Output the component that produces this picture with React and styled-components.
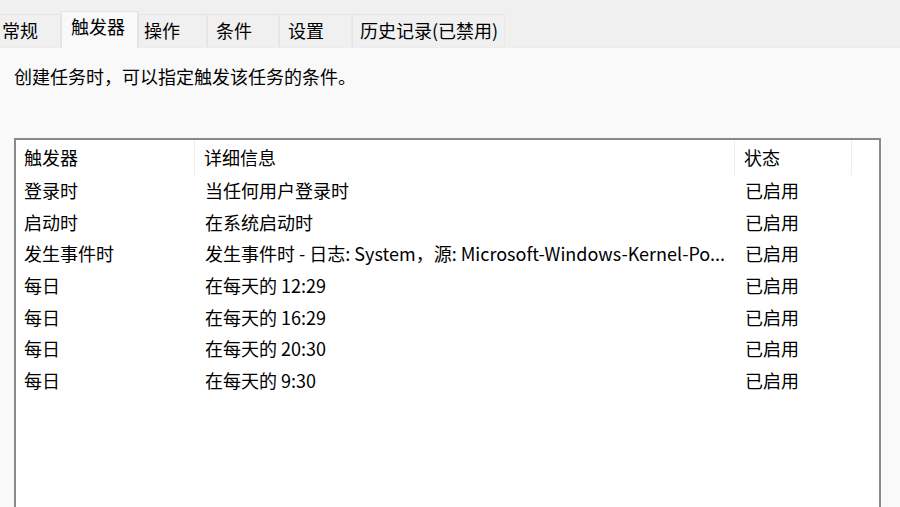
import React from 'react';
import styled, { createGlobalStyle } from 'styled-components';

const GlobalStyle = createGlobalStyle`
  html, body {
    margin: 0;
    padding: 0;
    background: #f9f9f9;
    overflow: hidden;
  }
  body {
    font-family: "Noto Sans CJK SC", "Noto Sans", sans-serif;
    color: #000;
  }
`;

const Page = styled.div`
  width: 900px;
  height: 507px;
  overflow: hidden;
  background: #f9f9f9;
`;

const TabStrip = styled.div`
  display: flex;
  align-items: flex-end;
  height: 48px;
  background: #f0f0f0;
  border-bottom: 1px solid #ececec;
  box-sizing: border-box;
`;

const Tab = styled.div`
  box-sizing: border-box;
  width: ${(p) => p.$w}px;
  margin-left: ${(p) => p.$offset || 0}px;
  height: ${(p) => (p.$active ? 37 : 33)}px;
  margin-bottom: ${(p) => (p.$active ? -1 : 0)}px;
  padding-left: ${(p) => p.$pad}px;
  padding-top: ${(p) => (p.$active ? 2 : 3)}px;
  font-size: 18px;
  line-height: 24px;
  white-space: nowrap;
  background: ${(p) => (p.$active ? '#f9f9f9' : '#f0f0f0')};
  border: 1px solid #e4e4e4;
  border-bottom: none;
  border-left: ${(p) => (p.$first ? 'none' : '1px solid #e4e4e4')};
  border-right: ${(p) => (p.$active ? '1px solid #e4e4e4' : '1px solid #e8e8e8')};
  position: relative;
  z-index: ${(p) => (p.$active ? 1 : 0)};
`;

const Description = styled.div`
  font-size: 18px;
  line-height: 24px;
  padding: 16px 0 0 14px;
  height: 90px;
  box-sizing: border-box;
`;

const ListBox = styled.div`
  margin: 0 19px 0 14px;
  height: 420px;
  background: #fff;
  border: 2px solid #8a8a8a;
  border-bottom: none;
  box-sizing: border-box;
`;

const Grid = styled.div`
  display: grid;
  grid-template-columns: 179px 540px 117px 1fr;
`;

const HeaderCell = styled.div`
  height: 35px;
  box-sizing: border-box;
  padding: 5px 0 0 ${(p) => p.$pad || 0}px;
  font-size: 18px;
  line-height: 24px;
  border-right: ${(p) => (p.$last ? 'none' : '1px solid #ededed')};
  white-space: nowrap;
`;

const Cell = styled.div`
  height: 31.67px;
  padding-left: ${(p) => p.$pad || 0}px;
  font-size: 18px;
  line-height: 31.67px;
  white-space: nowrap;
  overflow: hidden;
`;

const tabs = [
  { label: '常规', w: 69, offset: -8, pad: 10, first: true },
  { label: '触发器', w: 77, pad: 9, active: true },
  { label: '操作', w: 69, pad: 5 },
  { label: '条件', w: 72, pad: 8 },
  { label: '设置', w: 73, pad: 8 },
  { label: '历史记录(已禁用)', w: 153, pad: 7 },
];

const rows = [
  ['登录时', '当任何用户登录时', '已启用'],
  ['启动时', '在系统启动时', '已启用'],
  ['发生事件时', '发生事件时 - 日志: System，源: Microsoft-Windows-Kernel-Po...', '已启用'],
  ['每日', '在每天的 12:29', '已启用'],
  ['每日', '在每天的 16:29', '已启用'],
  ['每日', '在每天的 20:30', '已启用'],
  ['每日', '在每天的 9:30', '已启用'],
];

export default function App() {
  return (
    <Page>
      <GlobalStyle />
      <TabStrip>
        {tabs.map((t) => (
          <Tab
            key={t.label}
            $w={t.w}
            $offset={t.offset}
            $pad={t.pad}
            $active={t.active}
            $first={t.first}
          >
            {t.label}
          </Tab>
        ))}
      </TabStrip>
      <Description>创建任务时，可以指定触发该任务的条件。</Description>
      <ListBox>
        <Grid>
          <HeaderCell $pad={8}>触发器</HeaderCell>
          <HeaderCell $pad={9}>详细信息</HeaderCell>
          <HeaderCell $pad={9}>状态</HeaderCell>
          <HeaderCell $last />
          {rows.map((r, i) => (
            <React.Fragment key={i}>
              <Cell $pad={8}>{r[0]}</Cell>
              <Cell $pad={10}>{r[1]}</Cell>
              <Cell $pad={10}>{r[2]}</Cell>
              <Cell />
            </React.Fragment>
          ))}
        </Grid>
      </ListBox>
    </Page>
  );
}
